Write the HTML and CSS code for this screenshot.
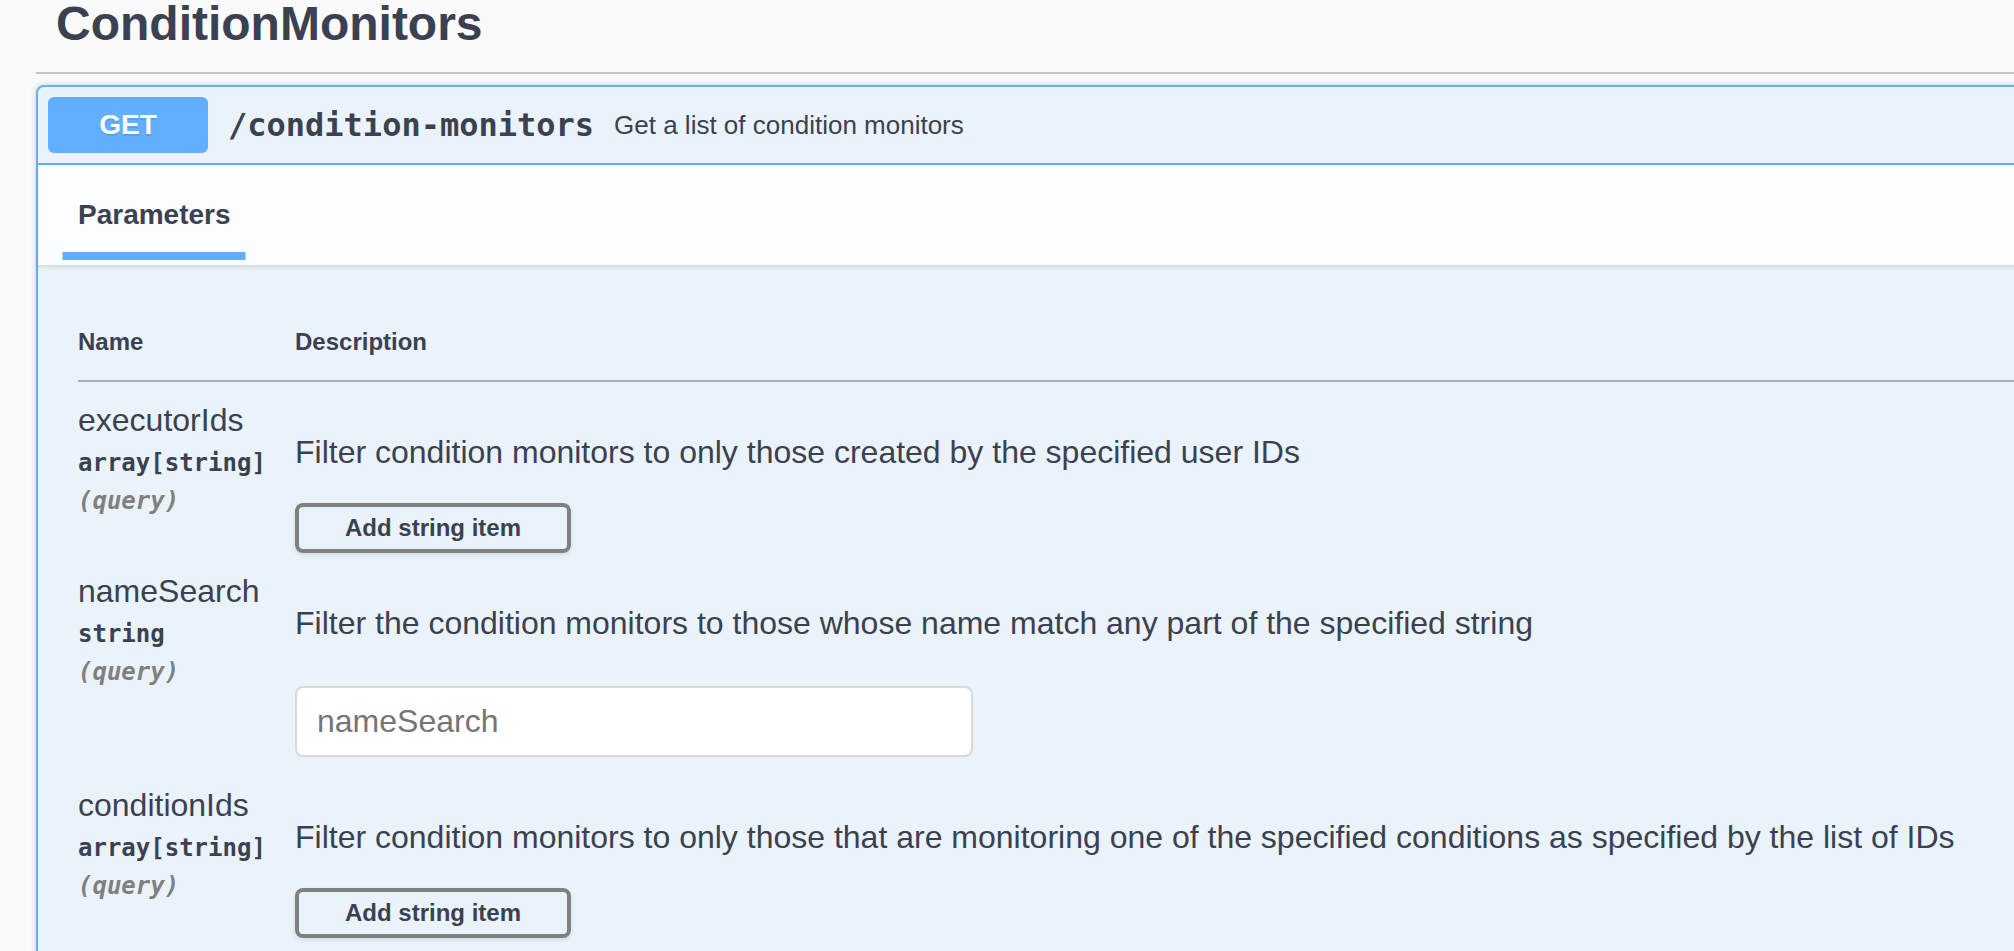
FILE: index.html
```html
<!DOCTYPE html>
<html lang="en">
<head>
<meta charset="utf-8">
<title>ConditionMonitors</title>
<link rel="stylesheet" href="styles.css">
</head>
<body>
<div class="tag-section">
  <h3 class="tag-title">ConditionMonitors</h3>
  <div class="opblock">
    <div class="summary">
      <span class="method">GET</span>
      <span class="path">/condition-monitors</span>
      <span class="summary-desc">Get a list of condition monitors</span>
    </div>
    <div class="section-header">
      <h4 class="tab"><span class="tab-label">Parameters</span></h4>
    </div>
    <div class="table-container">
      <table class="params">
        <thead>
          <tr><th class="col-name">Name</th><th>Description</th></tr>
        </thead>
        <tbody>
          <tr>
            <td class="col-name">
              <div class="p-name">executorIds</div>
              <div class="p-type">array[string]</div>
              <div class="p-in">(query)</div>
            </td>
            <td class="col-desc">
              <p>Filter condition monitors to only those created by the specified user IDs</p>
              <button class="btn" type="button">Add string item</button>
            </td>
          </tr>
          <tr>
            <td class="col-name">
              <div class="p-name">nameSearch</div>
              <div class="p-type">string</div>
              <div class="p-in">(query)</div>
            </td>
            <td class="col-desc">
              <p>Filter the condition monitors to those whose name match any part of the specified string</p>
              <input class="text-input" type="text" placeholder="nameSearch">
            </td>
          </tr>
          <tr>
            <td class="col-name">
              <div class="p-name">conditionIds</div>
              <div class="p-type">array[string]</div>
              <div class="p-in">(query)</div>
            </td>
            <td class="col-desc">
              <p>Filter condition monitors to only those that are monitoring one of the specified conditions as specified by the list of IDs</p>
              <button class="btn" type="button">Add string item</button>
            </td>
          </tr>
        </tbody>
      </table>
    </div>
  </div>
</div>
</body>
</html>
```

FILE: styles.css
```css
* { box-sizing: border-box; }

html, body {
  margin: 0;
  padding: 0;
}

body {
  width: 2014px;
  height: 951px;
  overflow: hidden;
  background: #fafafa;
  color: #3b4151;
  font-family: "Liberation Sans", Arial, sans-serif;
}

.tag-section {
  padding-left: 36px;
  margin-right: -80px;
}

.tag-title {
  margin: 0;
  padding: 0 20px 24px;
  font-size: 48px;
  line-height: 48px;
  font-weight: 700;
  border-bottom: 2px solid #c2c4c8;
}

.opblock {
  margin-top: 11px;
  border: 2px solid #61affe;
  border-radius: 8px;
  background: #ebf3fa;
  box-shadow: 0 0 6px rgba(0, 0, 0, 0.19);
}

.summary {
  display: flex;
  align-items: center;
  padding: 10px;
  border-bottom: 2px solid #61affe;
}

.method {
  width: 160px;
  height: 56px;
  display: flex;
  align-items: center;
  justify-content: center;
  background: #61affe;
  color: #fff;
  border-radius: 6px;
  font-size: 28px;
  font-weight: 700;
  text-shadow: 0 2px 0 rgba(0, 0, 0, 0.1);
}

.path {
  padding: 0 20px;
  font-family: "DejaVu Sans Mono", monospace;
  font-weight: 700;
  font-size: 32px;
}

.summary-desc {
  font-size: 26px;
}

.section-header {
  min-height: 100px;
  display: flex;
  align-items: center;
  padding: 0 40px;
  background: rgba(255, 255, 255, 0.8);
  box-shadow: 0 2px 4px rgba(0, 0, 0, 0.1);
}

.tab {
  margin: 0;
  font-size: 28px;
  font-weight: 700;
}

.tab-label {
  position: relative;
}

.tab-label::after {
  content: "";
  position: absolute;
  left: 50%;
  bottom: -30px;
  width: 120%;
  height: 8px;
  transform: translateX(-50%);
  background: #61affe;
}

.table-container {
  padding: 40px;
}

.params {
  width: 100%;
  border-collapse: collapse;
}

.params th {
  text-align: left;
  font-size: 24px;
  font-weight: 700;
  padding: 23px 0 24px;
  border-bottom: 2px solid #aab0bb;
}

.params td {
  vertical-align: top;
  padding: 20px 0 0;
}

.col-name {
  width: 217px;
}

.p-name {
  font-size: 32px;
}

.p-type {
  padding: 10px 0;
  font-family: "DejaVu Sans Mono", monospace;
  font-size: 24px;
  font-weight: 700;
}

.p-in {
  font-family: "DejaVu Sans Mono", monospace;
  font-size: 24px;
  font-weight: 700;
  font-style: italic;
  color: #808080;
}

.col-desc p {
  margin: 32px 0;
  font-size: 32px;
}

.btn {
  display: block;
  margin: 0;
  padding: 7px 46px;
  background: transparent;
  border: 4px solid #808080;
  border-radius: 8px;
  box-shadow: 0 2px 4px rgba(0, 0, 0, 0.1);
  color: #3b4151;
  font-family: "Liberation Sans", Arial, sans-serif;
  font-size: 24px;
  font-weight: 700;
  line-height: 28px;
}

.text-input {
  display: block;
  width: 678px;
  height: 71px;
  margin: 44px 0 10px;
  padding: 0 20px;
  border: 2px solid #d9d9d9;
  border-radius: 8px;
  background: #fff;
  color: #3b4151;
  font-family: "Liberation Sans", Arial, sans-serif;
  font-size: 32px;
}

.text-input::placeholder {
  color: #757575;
}
```
